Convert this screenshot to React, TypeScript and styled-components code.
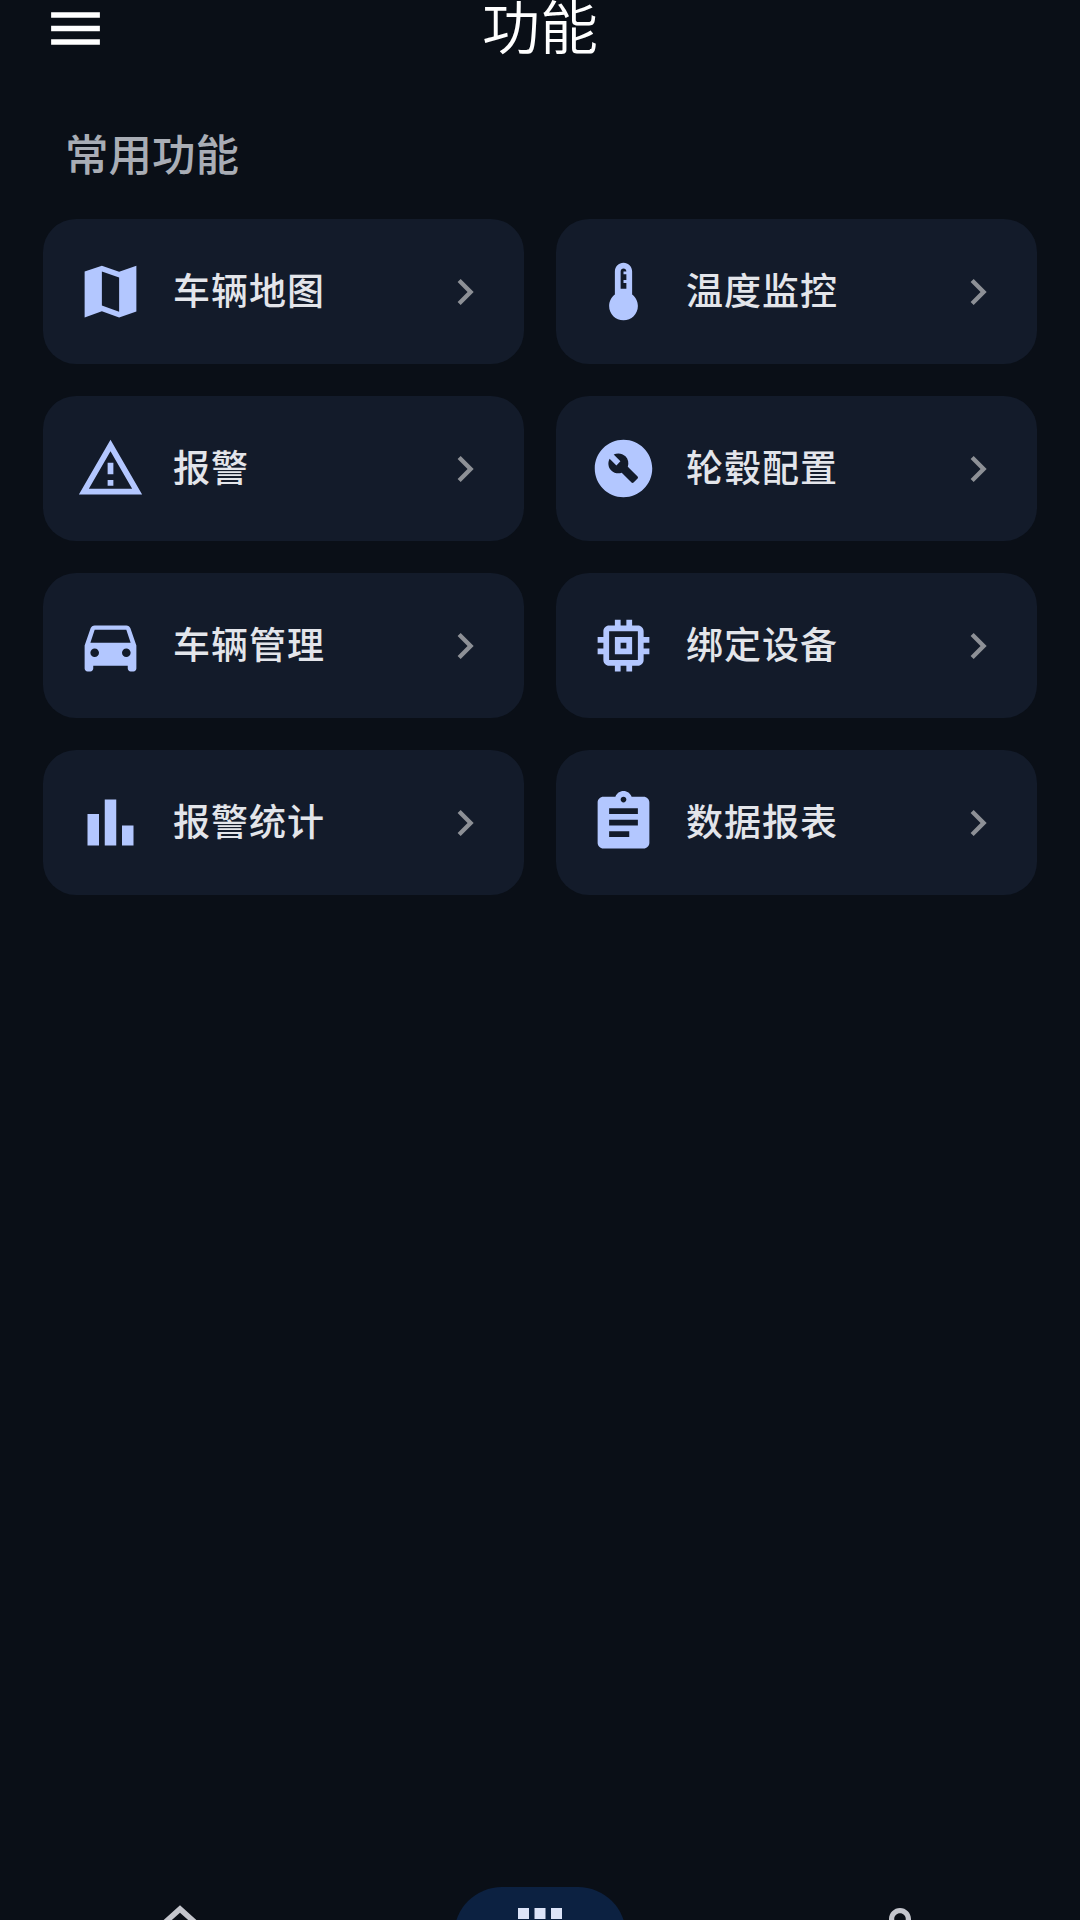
import styled, { createGlobalStyle } from "styled-components";

const GlobalStyle = createGlobalStyle`
  html, body {
    margin: 0;
    padding: 0;
    background: #0a0f17;
  }
  * {
    box-sizing: border-box;
  }
`;

const Page = styled.div`
  width: 1080px;
  height: 1920px;
  display: flex;
  flex-direction: column;
  overflow: hidden;
  background: #0a0f17;
  font-family: "Noto Sans CJK SC", "Noto Sans", sans-serif;
`;
const Header = styled.header`
  height: 56px;
  flex: none;
  padding-left: 43px;
  display: grid;
  grid-template-columns: 1fr auto 1fr;
  grid-template-rows: 56px;
  align-items: center;
`;
const MenuIcon = styled.svg`
  width: 65px;
  height: 65px;
  display: block;
  fill: #ffffff;
`;
const Title = styled.h1`
  margin: 0 43px 8px 0;
  font-size: 58px;
  line-height: 56px;
  font-weight: 350;
  color: #ffffff;
`;
const SectionTitle = styled.h2`
  margin: 69px 0 0;
  padding-left: 65px;
  height: 56px;
  font-size: 43.5px;
  line-height: 56px;
  font-weight: 500;
  color: #a9adb5;
`;
const Grid = styled.div`
  margin-top: 38px;
  padding: 0 43px;
  display: grid;
  grid-template-columns: 1fr 1fr;
  gap: 32px;
`;
const Card = styled.div`
  height: 145px;
  padding: 0 33px;
  display: flex;
  align-items: center;
  border-radius: 33px;
  background: #131b2a;
`;
const CardIcon = styled.svg`
  width: 69px;
  height: 69px;
  flex: none;
  fill: #b3c7ff;
`;
const CardLabel = styled.span`
  flex: 1;
  margin: 0 0 6px 28px;
  font-size: 37px;
  line-height: 48px;
  font-weight: 500;
  letter-spacing: 1px;
  color: #e3e5ea;
`;
const Chevron = styled.svg`
  width: 52px;
  height: 52px;
  flex: none;
  fill: #8d9096;
`;
const Nav = styled.nav`
  margin-top: auto;
  height: 33px;
  flex: none;
  display: grid;
  grid-template-columns: repeat(3, 1fr);
  justify-items: center;
`;
const NavItem = styled.div<{ $active?: boolean }>`
  width: 172px;
  height: 96px;
  padding-top: 10px;
  display: flex;
  justify-content: center;
  border-radius: 48px;
  background: ${(props) => (props.$active ? "#0c2141" : "transparent")};
`;
const NavIcon = styled.svg<{ $active?: boolean }>`
  width: 66px;
  height: 66px;
  flex: none;
  fill: ${(props) => (props.$active ? "#dde4f8" : "#c4c6cd")};
`;

const items = [
  {
    label: "车辆地图",
    icon: "M21 3l-6 2.1L9 3 3 5.02V21l6-2.1 6 2.1 6-2.02V3zM15 19l-6-2.11V5l6 2.11V19z",
  },
  {
    label: "温度监控",
    icon: "M15 13V5c0-1.66-1.34-3-3-3S9 3.34 9 5v8c-1.21.91-2 2.37-2 4 0 2.76 2.24 5 5 5s5-2.24 5-5c0-1.63-.79-3.09-2-4zm-4-8c0-.55.45-1 1-1s1 .45 1 1h-1v1h1v2h-1v1h1v2h-2V5z",
  },
  {
    label: "报警",
    icon: "M12 5.99L19.53 19H4.47L12 5.99M12 2L1 21h22L12 2zm1 14h-2v2h2v-2zm0-6h-2v4h2v-4z",
  },
  {
    label: "轮毂配置",
    icon: "M12 2C6.48 2 2 6.48 2 12c0 5.52 4.48 10 10 10s10-4.48 10-10C22 6.48 17.52 2 12 2zM16.9 15.49l-1.4 1.4c-.2.2-.51.2-.71 0l-3.41-3.41c-1.22.43-2.64.17-3.62-.81-1.11-1.11-1.3-2.79-.59-4.1l2.35 2.35 1.41-1.41-2.35-2.34c1.32-.71 2.99-.52 4.1.59.98.98 1.24 2.4.81 3.62l3.41 3.41c.19.19.19.51 0 .7z",
  },
  {
    label: "车辆管理",
    icon: "M18.92 6.01C18.72 5.42 18.16 5 17.5 5h-11c-.66 0-1.21.42-1.42 1.01L3 12v8c0 .55.45 1 1 1h1c.55 0 1-.45 1-1v-1h12v1c0 .55.45 1 1 1h1c.55 0 1-.45 1-1v-8l-2.08-5.99zM6.5 16c-.83 0-1.5-.67-1.5-1.5S5.67 13 6.5 13s1.5.67 1.5 1.5S7.33 16 6.5 16zm11 0c-.83 0-1.5-.67-1.5-1.5s.67-1.5 1.5-1.5 1.5.67 1.5 1.5-.67 1.5-1.5 1.5zM5 11l1.5-4.5h11L19 11H5z",
  },
  {
    label: "绑定设备",
    icon: "M15 9H9v6h6V9zm-2 4h-2v-2h2v2zm8-2V9h-2V7c0-1.1-.9-2-2-2h-2V3h-2v2h-2V3H9v2H7c-1.1 0-2 .9-2 2v2H3v2h2v2H3v2h2v2c0 1.1.9 2 2 2h2v2h2v-2h2v2h2v-2h2c1.1 0 2-.9 2-2v-2h2v-2h-2v-2h2zm-4 6H7V7h10v10z",
  },
  {
    label: "报警统计",
    icon: "M4 9h4v11H4zm12 4h4v7h-4zm-6-9h4v16h-4z",
  },
  {
    label: "数据报表",
    icon: "M19 3h-4.18C14.4 1.84 13.3 1 12 1c-1.3 0-2.4.84-2.82 2H5c-1.1 0-2 .9-2 2v14c0 1.1.9 2 2 2h14c1.1 0 2-.9 2-2V5c0-1.1-.9-2-2-2zm-7 0c.55 0 1 .45 1 1s-.45 1-1 1-1-.45-1-1 .45-1 1-1zm2 14H7v-2h7v2zm3-4H7v-2h10v2zm0-4H7V7h10v2z",
  },
];

const navIcons = [
  "M12 5.69l5 4.5V18h-2v-6H9v6H7v-7.81l5-4.5M12 3L2 12h3v8h6v-6h2v6h6v-8h3L12 3z",
  "M4 8h4V4H4v4zm6 12h4v-4h-4v4zm-6 0h4v-4H4v4zm0-6h4v-4H4v4zm6 0h4v-4h-4v4zm6-10v4h4V4h-4zm-6 4h4V4h-4v4zm6 6h4v-4h-4v4zm0 6h4v-4h-4v4z",
  "M12 5.9c1.16 0 2.1.94 2.1 2.1s-.94 2.1-2.1 2.1S9.9 9.16 9.9 8s.94-2.1 2.1-2.1m0 9c2.97 0 6.1 1.46 6.1 2.1v1.1H5.9V17c0-.64 3.13-2.1 6.1-2.1M12 4C9.79 4 8 5.79 8 8s1.79 4 4 4 4-1.79 4-4-1.79-4-4-4zm0 9c-2.67 0-8 1.34-8 4v3h16v-3c0-2.66-5.33-4-8-4z",
];

const App = () => {
  return (
    <Page>
      <GlobalStyle />
      <Header>
        <MenuIcon viewBox="0 0 24 24">
          <path d="M3 18h18v-2H3v2zm0-5h18v-2H3v2zm0-7v2h18V6H3z" />
        </MenuIcon>
        <Title>功能</Title>
      </Header>
      <SectionTitle>常用功能</SectionTitle>
      <Grid>
        {items.map((item) => (
          <Card key={item.label}>
            <CardIcon viewBox="0 0 24 24">
              <path d={item.icon} />
            </CardIcon>
            <CardLabel>{item.label}</CardLabel>
            <Chevron viewBox="0 0 24 24">
              <path d="M10 6L8.59 7.41 13.17 12l-4.58 4.59L10 18l6-6z" />
            </Chevron>
          </Card>
        ))}
      </Grid>
      <Nav>
        {navIcons.map((d, index) => (
          <NavItem key={d} $active={index === 1}>
            <NavIcon viewBox="0 0 24 24" $active={index === 1}>
              <path d={d} />
            </NavIcon>
          </NavItem>
        ))}
      </Nav>
    </Page>
  );
};

export default App;
